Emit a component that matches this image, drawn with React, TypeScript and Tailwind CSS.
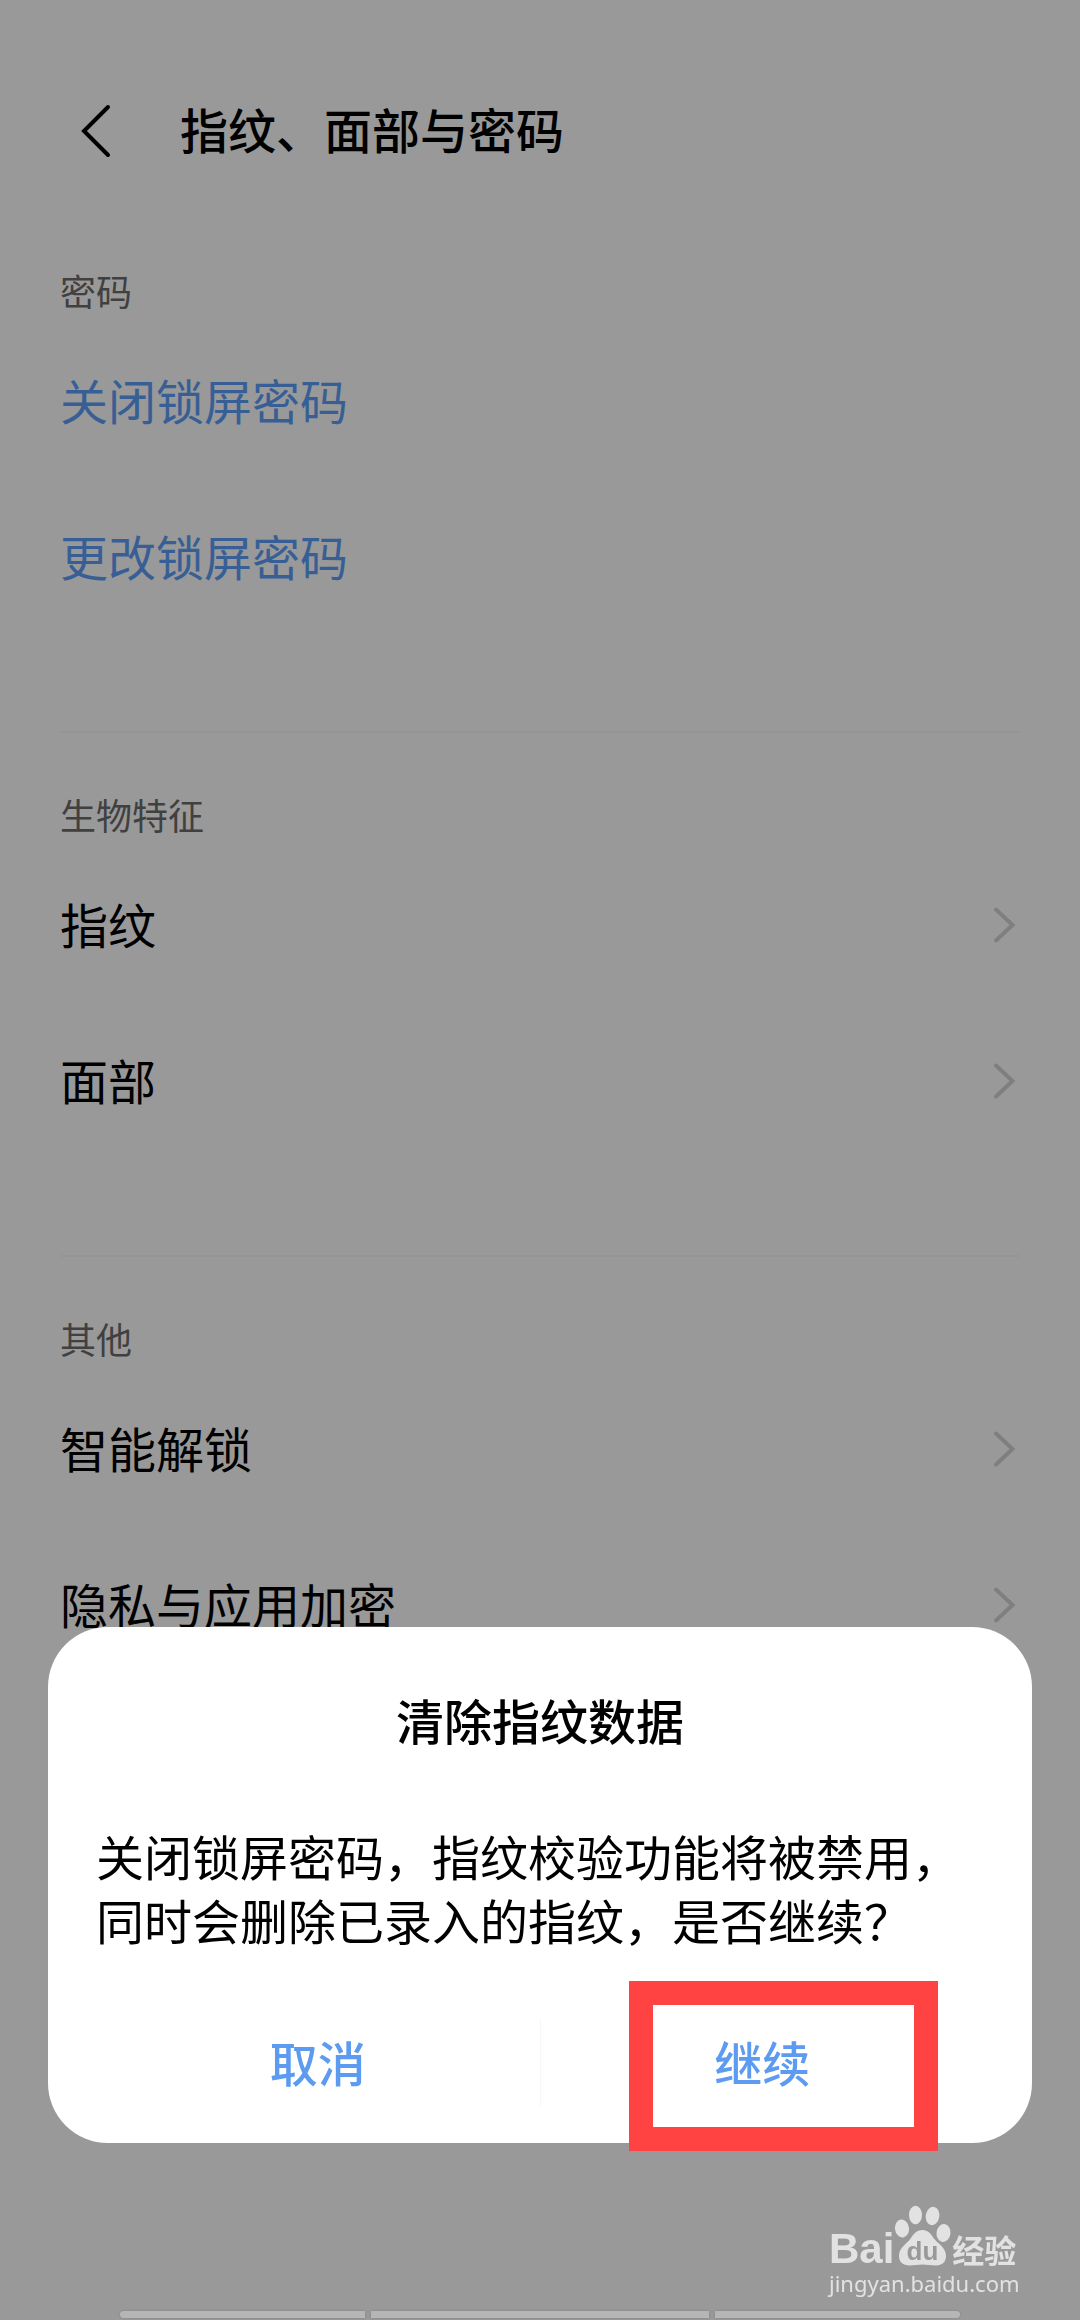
import React from "react";

type Row = {
  label: string;
  link?: boolean;
};

type Section = {
  title: string;
  rows: Row[];
};

const sections: Section[] = [
  {
    title: "密码",
    rows: [
      { label: "关闭锁屏密码", link: true },
      { label: "更改锁屏密码", link: true },
    ],
  },
  {
    title: "生物特征",
    rows: [{ label: "指纹" }, { label: "面部" }],
  },
  {
    title: "其他",
    rows: [{ label: "智能解锁" }, { label: "隐私与应用加密" }],
  },
];

const ChevronRight: React.FC = () => (
  <svg className="mr-1 h-10 w-6" viewBox="0 0 24 40" fill="none" aria-hidden="true">
    <path d="M4 4.5L20.5 20L4 35.5" stroke="#d4d4d4" strokeWidth="4" strokeLinecap="round" />
  </svg>
);

const SettingsRow: React.FC<{ row: Row }> = ({ row }) => (
  <li>
    <button
      type="button"
      className={`flex w-full h-[156px] items-center justify-between text-left text-5xl ${
        row.link ? "text-[#5e9ff8]" : "text-black"
      }`}
    >
      <span className="pb-1">{row.label}</span>
      {!row.link && <ChevronRight />}
    </button>
  </li>
);

const Header: React.FC = () => (
  <header className="flex h-[207px] items-center gap-12 px-15 pt-[52px]">
    <button type="button" aria-label="返回" className="flex w-[72px] justify-center">
      <svg className="w-8 h-14" viewBox="0 0 32 56" fill="none" aria-hidden="true">
        <path d="M28 5L4 29L28 53" stroke="#000" strokeWidth="4" strokeLinecap="round" />
      </svg>
    </button>
    <h1 className="pb-1 text-5xl font-medium">指纹、面部与密码</h1>
  </header>
);

const ConfirmDialog: React.FC = () => (
  <div
    role="dialog"
    aria-modal="true"
    aria-labelledby="dialog-title"
    className="mx-12 rounded-[60px] bg-white px-12 pt-15"
  >
    <h2 id="dialog-title" className="text-center text-5xl leading-16 font-medium">
      清除指纹数据
    </h2>
    <p className="mt-18 text-5xl leading-16">
      关闭锁屏密码，指纹校验功能将被禁用，同时会删除已录入的指纹，是否继续？
    </p>
    <div className="mt-13 flex h-[140px] items-center pb-5 text-5xl font-medium text-[#5c9bf0]">
      <button type="button" className="h-full flex-1 pb-1">
        取消
      </button>
      <div className="h-22 w-px bg-[#f7f7f7]" />
      <div className="relative h-full flex-1">
        <button type="button" className="h-full w-full pb-1">
          继续
        </button>
        {/* highlight box around the confirm button */}
        <div className="pointer-events-none absolute -top-[22px] left-[88px] h-[170px] w-[309px] border-24 border-[#ff4342]" />
      </div>
    </div>
  </div>
);

const Watermark: React.FC = () => (
  <div className="mr-15 w-[191px] self-end text-[#e2e2e2]">
    <div className="flex h-[62px] items-end">
      <span className="font-['Liberation_Sans',sans-serif] text-[42px] leading-9 font-bold">Bai</span>
      <svg className="h-[62px] w-[58px] shrink-0" viewBox="0 0 58 62" aria-hidden="true">
        <g fill="#e2e2e2">
          <ellipse cx="8" cy="23.500" rx="7" ry="9" transform="rotate(-8 8 23.500)" />
          <ellipse cx="21.500" cy="10" rx="6.500" ry="9.300" />
          <ellipse cx="38.500" cy="11" rx="6.800" ry="9.200" transform="rotate(10 38.500 11)" />
          <ellipse cx="49.500" cy="28" rx="7" ry="9" transform="rotate(6 49.500 28)" />
          <path d="M28.500 25C34 25 37 29 39.500 33C43 38 52 42 52 51C52 57 48 60.500 42 60.500C37 60.500 33 59.500 28.500 59.500C24 59.500 20 60.500 15.500 60.500C9 60.500 5 57 5 51C5 42 13 39 17 33C20 28.500 23 25 28.500 25Z" />
        </g>
        <text
          x="28.500"
          y="55"
          textAnchor="middle"
          fill="#999"
          fontSize="26"
          fontWeight="700"
          fontFamily="Liberation Sans, sans-serif"
        >
          du
        </text>
      </svg>
      <span className="text-[32px] leading-9 font-bold">经验</span>
    </div>
    <div className="font-['Noto_Sans',sans-serif] text-[22px] leading-8">jingyan.baidu.com</div>
  </div>
);

const App: React.FC = () => {
  return (
    <div className="relative min-h-screen bg-white font-['Noto_Sans_CJK_SC',sans-serif] text-black">
      <Header />
      <main className="px-15">
        {sections.map((section, i) => (
          <section key={section.title} className={`pt-[50px] ${i < sections.length - 1 ? "pb-24" : ""} relative`}>
            {i > 0 && <hr className="absolute inset-x-0 top-0 border-t-2 border-[#f8f8f8]" />}
            <h2 className="text-4xl leading-[66px] text-[#6c6c6c]">{section.title}</h2>
            <ul>
              {section.rows.map((row) => (
                <SettingsRow key={row.label} row={row} />
              ))}
            </ul>
          </section>
        ))}
      </main>

      {/* Scrim with the dialog docked at the bottom */}
      <div className="fixed inset-0 flex flex-col justify-end bg-black/40">
        <ConfirmDialog />
        <div className="mt-[62px] flex flex-col">
          <Watermark />
        </div>
        <div className="mx-30 mt-3 mb-0.5 flex gap-1.5">
          <div className="h-[7px] flex-[245] rounded-l-full bg-[#b6b6b6] shadow-[0_0_3px_#808080]" />
          <div className="h-[7px] flex-[338] bg-[#b6b6b6] shadow-[0_0_3px_#808080]" />
          <div className="h-[7px] flex-[245] rounded-r-full bg-[#b6b6b6] shadow-[0_0_3px_#808080]" />
        </div>
      </div>
    </div>
  );
};

export default App;
